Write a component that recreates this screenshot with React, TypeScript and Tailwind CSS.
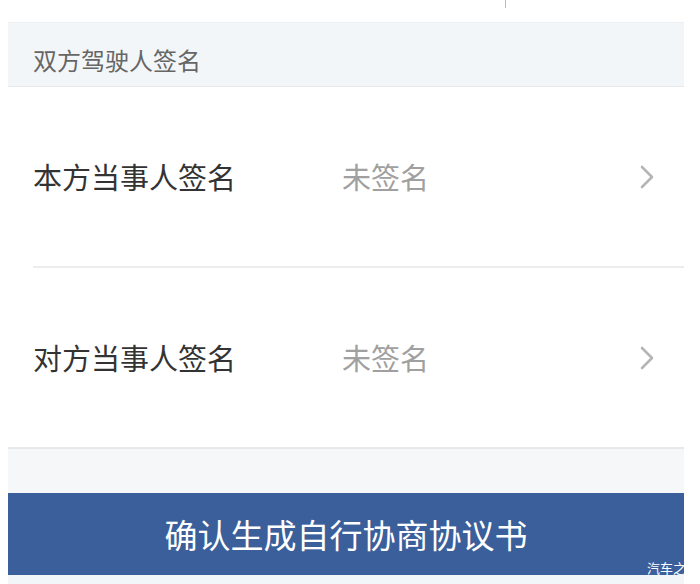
import React from 'react';

const font = { fontFamily: '"Noto Sans CJK SC", "Noto Sans", sans-serif' };

function SignRow({ label }: { label: string }) {
  return (
    <div className="flex h-[179px] items-center bg-white pl-[25px] pr-[28px]">
      <span className="w-[309px] text-[29px] leading-none text-[#333]">{label}</span>
      <span className="flex-1 text-[29px] leading-none text-[#a0a0a0]">未签名</span>
      <svg width="16" height="26" viewBox="0 0 16 26" fill="none" className="mr-[1px]">
        <path d="M3 3l10 10-10 10" stroke="#b5b5b5" strokeWidth="2.6" strokeLinecap="round" strokeLinejoin="round" />
      </svg>
    </div>
  );
}

export default function App() {
  return (
    <div className="relative h-[584px] w-[700px] overflow-hidden bg-white" style={font}>
      <div className="pl-[8px] pr-[16px]">
        {/* top strip */}
        <div className="flex h-[23px] border-b border-[#eceef0]">
          <div className="ml-[497px] h-[8px] w-px bg-[#bbb]" />
        </div>

        {/* section header */}
        <div className="flex h-[64px] items-center border-b border-[#e6e8ea] bg-[#f3f6f8] pl-[25px] pt-[10px]">
          <span className="text-[24px] leading-none text-[#666]">双方驾驶人签名</span>
        </div>

        <SignRow label="本方当事人签名" />
        <div className="ml-[25px] h-[2px] bg-[#ececec]" />
        <SignRow label="对方当事人签名" />
        <div className="h-[2px] bg-[#e8e8e8]" />

        <div className="h-[44px] bg-[#f5f7f9]" />

        <button className="flex h-[82px] w-full items-center justify-center bg-[#3a5f9b] text-[33px] leading-none text-white">
          确认生成自行协商协议书
        </button>
        <div className="h-[10px] bg-[#f3f6f8]" />
      </div>

      <span className="absolute left-[647px] top-[561px] text-[13px] leading-none text-white">汽车之</span>
    </div>
  );
}
